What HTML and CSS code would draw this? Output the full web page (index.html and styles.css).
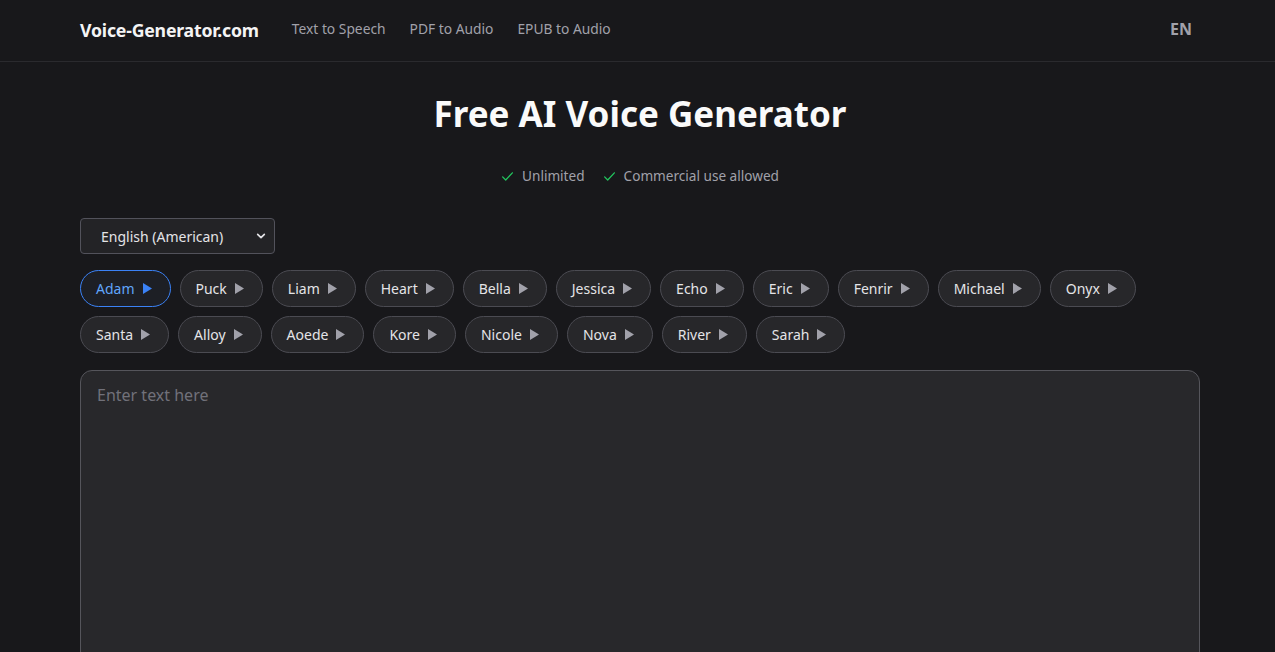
FILE: index.html
```html
<!doctype html>
<html lang="en">

<head>
    <meta charset="utf-8" />
    <meta name="viewport" content="width=device-width,initial-scale=1.0">
    <title>Free AI Voice Generator</title>
    <link rel="stylesheet" href="styles.css">
</head>

<body>
    <header class="topbar">
        <div class="topbar__inner">
            <a class="logo" href="#">Voice-Generator.com</a>
            <nav class="nav">
                <a href="#">Text to Speech</a>
                <a href="#">PDF to Audio</a>
                <a href="#">EPUB to Audio</a>
            </nav>
            <button class="lang">EN</button>
        </div>
    </header>

    <main class="page">
        <h1 class="title">Free AI Voice Generator</h1>

        <ul class="perks">
            <li>
                <svg class="perks__tick" viewBox="0 0 16 16" width="13" height="13"><path d="M2 8.5l3.8 3.8L14 3.5" fill="none" stroke="currentColor" stroke-width="1.6" stroke-linecap="round" stroke-linejoin="round"/></svg>
                Unlimited
            </li>
            <li>
                <svg class="perks__tick" viewBox="0 0 16 16" width="13" height="13"><path d="M2 8.5l3.8 3.8L14 3.5" fill="none" stroke="currentColor" stroke-width="1.6" stroke-linecap="round" stroke-linejoin="round"/></svg>
                Commercial use allowed
            </li>
        </ul>

        <div class="lang-select">
            <select>
                <option>English (American)</option>
                <option>English (British)</option>
            </select>
            <svg class="lang-select__arrow" viewBox="0 0 12 12" width="10" height="10"><path d="M2 4l4 4 4-4" fill="none" stroke="currentColor" stroke-width="2" stroke-linecap="round" stroke-linejoin="round"/></svg>
        </div>

        <div class="voices" id="voices"></div>

        <textarea class="editor" placeholder="Enter text here"></textarea>
    </main>

    <script>
        ;
        (function() {
            var names = ['Adam', 'Puck', 'Liam', 'Heart', 'Bella', 'Jessica', 'Echo', 'Eric', 'Fenrir', 'Michael', 'Onyx',
                'Santa', 'Alloy', 'Aoede', 'Kore', 'Nicole', 'Nova', 'River', 'Sarah'];
            var box = document.getElementById('voices');
            var play = '<svg class="voice__play" viewBox="0 0 10 12" width="9" height="11"><path d="M0 0L10 6 0 12z" fill="currentColor"/></svg>';

            names.forEach(function(name, i) {
                var btn = document.createElement('button');
                btn.className = 'voice' + (i === 0 ? ' voice--active' : '');
                btn.innerHTML = '<span>' + name + '</span>' + play;
                box.appendChild(btn);
            });
        })();
    </script>
</body>

</html>
```

FILE: styles.css
```css
* {
    box-sizing: border-box;
}

body {
    margin: 0;
    background: #18181b;
    color: #fafafa;
    font-family: "Noto Sans", "Open Sans", sans-serif;
    overflow: hidden;
}

a {
    color: inherit;
    text-decoration: none;
}

/* top bar */
.topbar {
    border-bottom: 1px solid #2a2a2e;
}

.topbar__inner {
    display: flex;
    align-items: center;
    width: 1120px;
    height: 61px;
    margin-left: 80px;
}

.logo {
    margin-top: -1px;
    font-size: 17.7px;
    font-weight: 700;
    color: #f4f4f5;
    letter-spacing: -0.2px;
}

.nav {
    display: flex;
    gap: 24px;
    margin-left: 33px;
    margin-top: -5px;
}

.nav a {
    font-size: 13.8px;
    color: #a1a1aa;
}

.lang {
    margin-left: auto;
    margin-top: -3px;
    padding: 4px 8px;
    border: 0;
    background: none;
    font: inherit;
    font-size: 16px;
    font-weight: 700;
    color: #a1a1aa;
}

/* main column */
.page {
    width: 1120px;
    margin-left: 80px;
    padding-top: 30px;
}

.title {
    margin: 0;
    font-size: 35px;
    line-height: 44px;
    font-weight: 700;
    text-align: center;
    color: #fafafa;
}

.perks {
    display: flex;
    justify-content: center;
    gap: 18px;
    margin: 30px 0 0;
    padding: 0;
    list-style: none;
    font-size: 13.6px;
    line-height: 20px;
    color: #a1a1aa;
}

.perks li {
    display: flex;
    align-items: center;
    gap: 8px;
}

.perks__tick {
    color: #22c55e;
}

.lang-select {
    position: relative;
    width: 195px;
    margin-top: 32px;
}

.lang-select select {
    width: 100%;
    height: 36px;
    padding: 0 20px;
    border: 1px solid #52525b;
    border-radius: 4px;
    background: #232326;
    color: #e4e4e7;
    font: inherit;
    font-size: 14px;
    appearance: none;
    -webkit-appearance: none;
}

.lang-select__arrow {
    position: absolute;
    top: 13px;
    right: 9px;
    color: #e4e4e7;
    pointer-events: none;
}

/* voice chips */
.voices {
    display: flex;
    flex-wrap: wrap;
    gap: 9px;
    margin-top: 16px;
}

.voice {
    display: inline-flex;
    align-items: center;
    gap: 8px;
    height: 37px;
    padding: 0 18px 0 15px;
    border: 1px solid #4b4b52;
    border-radius: 999px;
    background: #27272a;
    color: #e4e4e7;
    font: inherit;
    font-size: 14px;
}

.voice__play {
    color: #a1a1aa;
}

.voice--active {
    border-color: #3b82f6;
    background: #1d1f25;
    color: #60a5fa;
}

.voice--active .voice__play {
    color: #3b82f6;
}

/* text input */
.editor {
    display: block;
    width: 100%;
    height: 320px;
    margin-top: 17px;
    padding: 12px 16px;
    border: 1px solid #55555b;
    border-radius: 12px;
    background: #28282b;
    color: #fafafa;
    font: inherit;
    font-size: 16px;
    line-height: 24px;
    resize: none;
}

.editor::placeholder {
    color: #71717a;
}
```
